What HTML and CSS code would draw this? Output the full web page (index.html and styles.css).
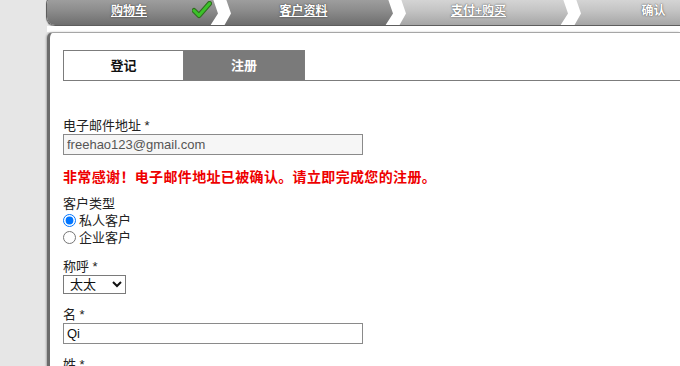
FILE: index.html
```html
<!DOCTYPE html>
<html lang="zh">
<head>
<meta charset="utf-8">
<title>注册</title>
<link rel="stylesheet" href="styles.css">
</head>
<body>
<div class="frame">
  <div class="steps">
    <div class="step dark"><a href="#">购物车</a>
      <svg class="check" width="20" height="18" viewBox="0 0 20 18"><path d="M2 9.5 L7 14.5 L17.5 2.5" fill="none" stroke="#2f6b1e" stroke-width="5" stroke-linecap="round" stroke-linejoin="round"/><path d="M2 9.5 L7 14.5 L17.5 2.5" fill="none" stroke="#3cc22a" stroke-width="3" stroke-linecap="round" stroke-linejoin="round"/></svg>
      <svg class="chev" width="22" height="30" viewBox="0 0 22 30"><polygon points="2,0 15,0 21,17.5 14,30 0,30 8,17.5" fill="#ffffff"/></svg>
    </div>
    <div class="step dark"><a href="#">客户资料</a>
      <svg class="chev" width="22" height="30" viewBox="0 0 22 30"><polygon points="2,0 15,0 21,17.5 14,30 0,30 8,17.5" fill="#ffffff"/></svg>
    </div>
    <div class="step light"><a href="#">支付+购买</a>
      <svg class="chev" width="22" height="30" viewBox="0 0 22 30"><polygon points="2,0 15,0 21,17.5 14,30 0,30 8,17.5" fill="#ffffff"/></svg>
    </div>
    <div class="step light"><span>确认</span></div>
  </div>
  <div class="gap"></div>
  <div class="panel">
    <div class="tabs">
      <div class="tab">登记</div>
      <div class="tab active">注册</div>
    </div>
    <div class="field first">
      <label class="lbl">电子邮件地址 *</label>
      <input class="txt ro" type="text" value="freehao123@gmail.com" readonly>
    </div>
    <p class="notice">非常感谢！电子邮件地址已被确认。请立即完成您的注册。</p>
    <div class="field group">
      <span class="lbl">客户类型</span>
      <label class="radio"><input type="radio" name="t" checked>私人客户</label>
      <label class="radio"><input type="radio" name="t">企业客户</label>
    </div>
    <div class="field">
      <label class="lbl">称呼 *</label>
      <select class="sel"><option>太太</option><option>先生</option></select>
    </div>
    <div class="field">
      <label class="lbl">名 *</label>
      <input class="txt" type="text" value="Qi">
    </div>
    <div class="field">
      <label class="lbl">姓 *</label>
      <input class="txt" type="text" value="">
    </div>
  </div>
</div>
</body>
</html>
```
FILE: styles.css
```css
html, body {
  margin: 0;
  padding: 0;
  background: #e6e6e6;
  font-family: "Liberation Sans", "Noto Sans CJK SC", sans-serif;
  font-size: 13px;
  color: #222;
  overflow: hidden;
}
.frame {
  margin-left: 46px;
}
.steps {
  display: flex;
  height: 29px;
  margin-top: -5px;
  border-radius: 9px 0 0 9px;
  overflow: hidden;
  border: 1px solid #5e5e5e;
  border-right: none;
  box-shadow: 0 1px 1px rgba(0,0,0,0.35);
}
.step {
  position: relative;
  flex: 0 0 175px;
  box-sizing: border-box;
  padding: 5px 10px 0 0;
  text-align: center;
  line-height: 20px;
  font-weight: bold;
  font-size: 12px;
}
.step.dark {
  background: linear-gradient(#a4a4a4, #8c8c8c 50%, #6e6e6e);
}
.step.light {
  background: linear-gradient(#dadada, #c4c4c4 50%, #a6a6a6);
}
.step a, .step span {
  position: relative;
  z-index: 2;
  color: #fff;
  text-decoration: underline;
  text-shadow: 0 0 2px rgba(0,0,0,0.5), 0 0 1px rgba(0,0,0,0.4);
}
.step span {
  text-decoration: none;
}
.step:first-child {
  flex-basis: 174px;
}
.check {
  position: absolute;
  left: 145px;
  top: 5px;
  z-index: 2;
}
.chev {
  position: absolute;
  right: -11px;
  top: 0;
  z-index: 3;
}
.gap {
  height: 6px;
  background: #fff;
  margin-left: 1px;
}
.panel {
  background: #fff;
  border-left: 3px solid #6c6c6c;
  border-top: 1px solid #a6a6a6;
  border-top-left-radius: 6px;
  box-shadow: -1px 0 2px rgba(0,0,0,0.25);
  padding: 17px 0 40px 13px;
  margin-left: 1px;
}
.tabs {
  display: flex;
  border-bottom: 1px solid #7c7c7c;
  height: 30px;
}
.tab {
  width: 121px;
  box-sizing: border-box;
  border: 1px solid #7c7c7c;
  border-bottom: none;
  text-align: center;
  line-height: 29px;
  font-weight: bold;
  color: #111;
}
.tab.active {
  background: #7a7a7a;
  color: #fff;
  border-left: none;
}
.field {
  margin-top: 13px;
}
.field.first {
  margin-top: 37px;
}
.field.group {
  margin-top: 10px;
}
.lbl {
  display: block;
  line-height: 15px;
  height: 16px;
  color: #222;
}
.txt {
  display: block;
  box-sizing: border-box;
  width: 300px;
  height: 21px;
  margin: 0;
  padding: 0 3px;
  border: 1px solid #8a8a8a;
  border-radius: 0;
  font-family: "Liberation Sans", "Noto Sans CJK SC", sans-serif;
  font-size: 13px;
  color: #111;
  background: #fff;
}
.txt.ro {
  background: #f6f6f6;
  color: #555;
}
.notice {
  margin: 13px 0 0;
  line-height: 18px;
  font-size: 14px;
  font-weight: bold;
  letter-spacing: 0.35px;
  color: #ee0000;
}
.radio {
  display: flex;
  align-items: center;
  height: 17px;
  line-height: 17px;
  color: #222;
}
.radio input {
  margin: 0 3px 0 0;
  width: 13px;
  height: 13px;
}
.sel {
  display: block;
  box-sizing: border-box;
  width: 63px;
  height: 19px;
  margin: 0;
  padding: 0 0 0 2px;
  border: 1px solid #7a7a7a;
  border-radius: 0;
  font-family: "Liberation Sans", "Noto Sans CJK SC", sans-serif;
  font-size: 13px;
  color: #111;
  background: #fff;
}
```
